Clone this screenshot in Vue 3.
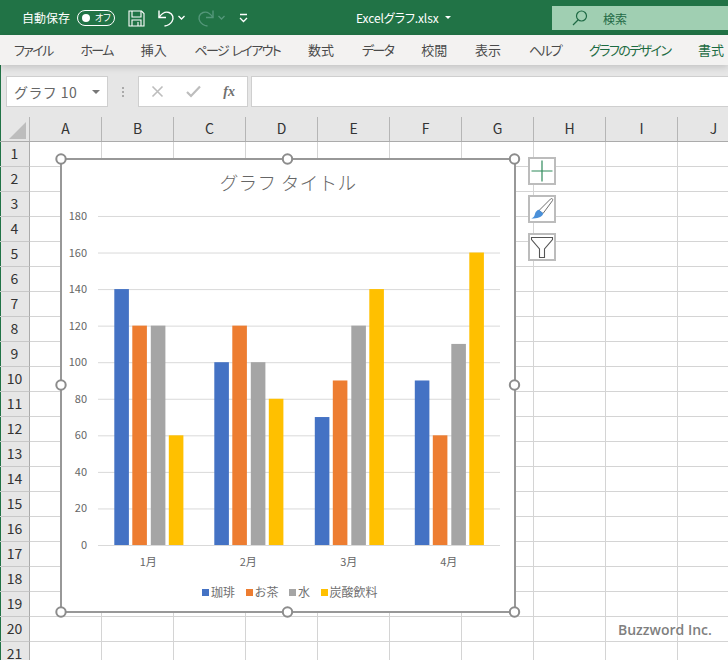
<script setup>
const tabs = [
  { name: "ファイル", kana: true },
  { name: "ホーム", kana: true },
  { name: "挿入" },
  { name: "ページ レイアウト", kana: true },
  { name: "数式" },
  { name: "データ", kana: true },
  { name: "校閲" },
  { name: "表示" },
  { name: "ヘルプ", kana: true },
  { name: "グラフのデザイン", kana: true, green: true },
  { name: "書式", green: true },
];

const columns = ["A", "B", "C", "D", "E", "F", "G", "H", "I", "J"];
const rows = Array.from({ length: 21 }, (_, i) => i + 1);
const ticks = [180, 160, 140, 120, 100, 80, 60, 40, 20, 0];

const colors = ["#4472c4", "#ed7d31", "#a5a5a5", "#ffc000"];
const offsets = [0, 18, 36.5, 54.5];
const months = [
  { label: "1月", x: 114.3, values: [140, 120, 120, 60] },
  { label: "2月", x: 214.3, values: [100, 120, 100, 80] },
  { label: "3月", x: 314.8, values: [70, 90, 120, 140] },
  { label: "4月", x: 414.8, values: [90, 60, 110, 160] },
];

const legend = [
  { name: "珈琲", color: colors[0] },
  { name: "お茶", color: colors[1] },
  { name: "水", color: colors[2] },
  { name: "炭酸飲料", color: colors[3] },
];

const valueY = (v) => 545 - v * 1.828;

const handles = [
  [61, 159],
  [287.5, 159],
  [514.5, 159],
  [61, 385],
  [514.5, 385],
  [61, 612],
  [287.5, 612],
  [514.5, 612],
];
</script>

<template>
  <div class="app">
    <header class="titlebar">
      <div class="qat">
        <span class="autosave">自動保存</span>
        <span class="toggle"><i class="toggle-dot"></i><span class="toggle-text">オフ</span></span>
        <svg class="save" width="17" height="17" viewBox="0 0 17 17" fill="none" stroke="#fff" stroke-width="1.1">
          <path d="M1 1h12.5L16 3.5V16H1z" />
          <path d="M4 1v6h9V1M4 16v-6h9v6M10 16v-4" />
        </svg>
        <svg class="undo" width="18" height="18" viewBox="0 0 18 18" fill="none" stroke="#fff" stroke-width="1.4">
          <path d="M2 1.5V8.5H9" />
          <path d="M2 8.5C5 4 9 2.5 12 3.5C16 5 17 9 15 12.5C13.500 15 11 16.500 7.500 17" />
        </svg>
        <svg class="chev" width="7" height="5" viewBox="0 0 7 5" fill="none" stroke="#fff" stroke-width="1.3">
          <path d="M.5 1l3 3 3-3" />
        </svg>
        <svg class="redo" width="18" height="18" viewBox="0 0 18 18" fill="none" stroke="#54977a" stroke-width="1.4">
          <path d="M16 1.5V8.5H9" />
          <path d="M16 8.5C13 4 9 2.500 6 3.500C2 5 1 9 3 12.500C4.500 15 7 16.500 10.500 17" />
        </svg>
        <svg class="chev dim" width="7" height="5" viewBox="0 0 7 5" fill="none" stroke="#54977a" stroke-width="1.3">
          <path d="M.5 1l3 3 3-3" />
        </svg>
        <svg class="more" width="9" height="10" viewBox="0 0 9 10" fill="none" stroke="#fff" stroke-width="1.3">
          <path d="M1 1.500h7M1 5l3.500 3.500L8 5" />
        </svg>
      </div>
      <div class="filename">Excelグラフ.xlsx<span class="file-caret"></span></div>
      <div class="search">
        <svg width="16" height="16" viewBox="0 0 16 16" fill="none" stroke="#1f6a45" stroke-width="1.2">
          <circle cx="9.500" cy="6" r="5" />
          <path d="M6 10L1 15" />
        </svg>
        <span>検索</span>
      </div>
    </header>

    <nav class="tabs">
      <span
        v-for="tab in tabs"
        :key="tab.name"
        class="tab"
        :class="{ 'tab-green': tab.green, 'tab-kana': tab.kana }"
      >{{ tab.name }}</span>
    </nav>

    <div class="formula-bar">
      <div class="name-box">
        <span>グラフ 10</span>
        <i class="name-caret"></i>
      </div>
      <div class="grip"><i></i><i></i><i></i></div>
      <div class="fx-box">
        <svg width="13" height="13" viewBox="0 0 13 13" fill="none" stroke="#bdbdbd" stroke-width="1.6">
          <path d="M1.500 1.500l10 10M11.500 1.500l-10 10" />
        </svg>
        <svg width="15" height="13" viewBox="0 0 15 13" fill="none" stroke="#bdbdbd" stroke-width="2.200">
          <path d="M1 7l4 4 9-9.500" />
        </svg>
        <span class="fx">fx</span>
      </div>
      <div class="formula-input"></div>
    </div>

    <div class="sheet">
      <div class="col-header">
        <div class="corner"><i></i></div>
        <div v-for="col in columns" :key="col" class="col-cell">{{ col }}</div>
      </div>
      <div v-for="row in rows" :key="row" class="row">
        <div class="row-head">{{ row }}</div>
        <div v-for="col in columns" :key="col" class="cell"></div>
      </div>

      <div class="chart">
        <svg class="chart-svg" width="456" height="455" viewBox="60 158 456 455">
          <text class="chart-title" x="288" y="190" text-anchor="middle">グラフ タイトル</text>
          <g v-for="tick in ticks" :key="tick">
            <line x1="98" x2="500" :y1="valueY(tick) + 0.5" :y2="valueY(tick) + 0.5" stroke="#d9d9d9" />
            <text class="axis" x="87" :y="valueY(tick) + 4" text-anchor="end">{{ tick }}</text>
          </g>
          <g v-for="month in months" :key="month.label">
            <rect
              v-for="(value, i) in month.values"
              :key="i"
              :x="month.x + offsets[i]"
              :y="valueY(value)"
              width="14.600"
              :height="545 - valueY(value)"
              :fill="colors[i]"
            />
            <text class="axis" :x="month.x + 34" y="566" text-anchor="middle">{{ month.label }}</text>
          </g>
        </svg>
        <div class="legend">
          <span v-for="item in legend" :key="item.name" class="legend-item">
            <i class="legend-key" :style="{ background: item.color }"></i>{{ item.name }}
          </span>
        </div>
      </div>

      <svg class="handles" width="470" height="470" viewBox="54 152 470 470">
        <circle
          v-for="(h, i) in handles"
          :key="i"
          :cx="h[0]"
          :cy="h[1]"
          r="4.700"
          fill="#fff"
          stroke="#8c8c8c"
          stroke-width="2"
        />
      </svg>

      <div class="chart-tools">
        <div class="tool">
          <svg width="24" height="24" viewBox="0 0 24 24" fill="none" stroke="#2f8a5b" stroke-width="1.200">
            <path d="M12 1.500v21M1.500 12h21" />
          </svg>
        </div>
        <div class="tool">
          <svg width="24" height="24" viewBox="0 0 24 24">
            <path d="M9 13.500L20.500 2c1.200-1 2.800-.2 2 1.600L13 16.500z" fill="#fff" stroke="#6e6e6e" stroke-width="1" />
            <path d="M9 12.800l4.300 3.800c-1 3-4.800 5.400-12 4.800 3-1 3-2.200 3.800-4.800.6-2 2.400-3.800 3.900-3.800z" fill="#4a90d9" />
          </svg>
        </div>
        <div class="tool">
          <svg width="24" height="24" viewBox="0 0 24 24" fill="#fff" stroke="#555" stroke-width="1.100">
            <path d="M1.500 2.500h21v2l-8 9.500v8.500h-5V14l-8-9.500z" />
          </svg>
        </div>
      </div>

      <div class="watermark">Buzzword Inc.</div>
    </div>
  </div>
</template>

<style scoped>
.app {
  width: 728px;
  height: 660px;
  overflow: hidden;
  background: #fff;
  font-family: "Noto Sans CJK JP", "Noto Sans", sans-serif;
}

.titlebar {
  height: 35px;
  background: #217346;
  display: flex;
  align-items: flex-start;
  color: #fff;
}

.qat {
  display: flex;
  align-items: center;
  height: 35px;
  width: 356px;
  padding-left: 22px;
  box-sizing: border-box;
}

.autosave {
  font-size: 12px;
  line-height: 35px;
  width: 55px;
}

.toggle {
  width: 38px;
  height: 16px;
  border: 1.500px solid #fff;
  border-radius: 9px;
  box-sizing: border-box;
  display: flex;
  align-items: center;
  padding-left: 4px;
}

.toggle-dot {
  width: 8px;
  height: 8px;
  border-radius: 50%;
  background: #fff;
}

.toggle-text {
  font-size: 9px;
  line-height: 12px;
  margin-left: 5px;
  font-feature-settings: "palt";
}

.save {
  margin-left: 13px;
  margin-top: 1px;
}

.undo {
  margin-left: 12px;
}

.chev {
  margin-left: 3px;
}

.redo {
  margin-left: 12px;
}

.more {
  margin-left: 14px;
}

.filename {
  width: 196px;
  font-size: 12px;
  line-height: 35px;
  font-feature-settings: "palt";
  letter-spacing: -0.1px;
  display: flex;
  align-items: center;
}

.file-caret {
  margin-left: 6px;
  border: 3px solid transparent;
  border-top: 3px solid #fff;
  margin-top: 3px;
}

.search {
  flex: 1;
  height: 24px;
  margin-top: 6px;
  background: #a0cfb2;
  display: flex;
  align-items: center;
  gap: 15px;
  padding-left: 20px;
  font-size: 12px;
  color: #1f6a45;
}

.tabs {
  position: relative;
  height: 30px;
  box-sizing: border-box;
  padding: 0 0 2px 14px;
  background: #f3f2f1;
  display: flex;
  align-items: center;
  gap: 27.800px;
  box-shadow: 0 2px 7px rgba(0, 0, 0, 0.16);
  white-space: nowrap;
}

.tab {
  font-size: 13px;
  color: #4a4a4a;
  font-feature-settings: "palt";
}

.tab-kana {
  letter-spacing: -1.600px;
  word-spacing: 2px;
}

.tab-green {
  color: #1c6b42;
}

.formula-bar {
  height: 52px;
  box-sizing: border-box;
  padding: 11px 0 10px 6px;
  background: #e6e6e6;
  display: flex;
  box-shadow: inset 1px 0 #217346;
}

.name-box {
  width: 102px;
  box-sizing: border-box;
  border: 1px solid #cfcfcf;
  background: #fff;
  display: flex;
  align-items: center;
  justify-content: space-between;
  padding: 0 7px;
  font-size: 14px;
  letter-spacing: 0.4px;
  color: #666;
}

.name-caret {
  border: 4px solid transparent;
  border-top: 4px solid #777;
  border-bottom: 0;
}

.grip {
  width: 30px;
  display: flex;
  flex-direction: column;
  align-items: center;
  justify-content: center;
  gap: 2px;
}

.grip i {
  width: 2px;
  height: 2px;
  background: #aaa;
}

.fx-box {
  width: 110px;
  box-sizing: border-box;
  border: 1px solid #cfcfcf;
  background: #fff;
  display: flex;
  align-items: center;
  justify-content: space-between;
  padding: 0 12px;
}

.fx {
  font-family: "Liberation Serif", serif;
  font-style: italic;
  font-weight: 700;
  font-size: 14px;
  color: #707070;
}

.formula-input {
  flex: 1;
  margin-left: 3px;
  border: 1px solid #cfcfcf;
  border-right: 0;
  background: #fff;
}

.sheet {
  position: relative;
}

.col-header {
  display: flex;
  height: 25px;
  box-sizing: border-box;
  border-bottom: 1px solid #ababab;
  background: #e6e6e6;
  box-shadow: inset 1px 0 #217346;
}

.corner {
  width: 30px;
  flex: none;
  box-sizing: border-box;
  border-right: 1px solid #b5b5b5;
  position: relative;
}

.corner i {
  position: absolute;
  left: 9px;
  bottom: 2px;
  border-style: solid;
  border-width: 0 0 17px 17px;
  border-color: transparent transparent #bdbdbd transparent;
}

.col-cell {
  width: 72px;
  flex: none;
  box-sizing: border-box;
  border-right: 1px solid #b5b5b5;
  font-size: 14px;
  line-height: 22px;
  text-align: center;
  color: #333;
}

.row {
  display: flex;
  height: 25px;
}

.row-head {
  width: 30px;
  flex: none;
  box-sizing: border-box;
  background: #e6e6e6;
  border-right: 1px solid #ababab;
  border-bottom: 1px solid #c8c8c8;
  font-size: 14px;
  line-height: 22px;
  text-align: center;
  color: #333;
  box-shadow: inset 1px 0 #217346;
}

.cell {
  width: 72px;
  flex: none;
  box-sizing: border-box;
  border-right: 1px solid #d4d4d4;
  border-bottom: 1px solid #d4d4d4;
}

.chart {
  position: absolute;
  left: 60px;
  top: 41px;
  width: 456px;
  height: 455px;
  box-sizing: border-box;
  border: 2px solid #989898;
  background: #fff;
}

.chart-svg {
  position: absolute;
  left: -2px;
  top: -2px;
}

.chart-title {
  font-size: 18.600px;
  font-weight: 300;
  fill: #666;
  letter-spacing: 0.300px;
}

.axis {
  font-size: 11px;
  fill: #666;
}

.legend {
  position: absolute;
  left: 140px;
  top: 423px;
  display: flex;
  gap: 10.500px;
  font-size: 12px;
  line-height: 18px;
  color: #707070;
  white-space: nowrap;
}

.legend-item {
  display: flex;
  align-items: center;
}

.legend-key {
  width: 7px;
  height: 7px;
  margin-right: 2px;
}

.handles {
  position: absolute;
  left: 54px;
  top: 35px;
  pointer-events: none;
}

.chart-tools {
  position: absolute;
  left: 528px;
  top: 40px;
  display: flex;
  flex-direction: column;
  gap: 10px;
}

.tool {
  width: 28px;
  height: 28px;
  box-sizing: border-box;
  border: 2px solid #bcbcbc;
  background: #fff;
  display: flex;
  align-items: center;
  justify-content: center;
}

.watermark {
  position: absolute;
  left: 618px;
  top: 503px;
  font-family: "Open Sans", sans-serif;
  font-weight: 600;
  font-size: 14px;
  line-height: 20px;
  color: #7f7f7f;
  text-shadow: 0 0 3px #fff, 0 0 3px #fff;
  white-space: nowrap;
}
</style>

<style>
html,
body {
  margin: 0;
}
</style>
